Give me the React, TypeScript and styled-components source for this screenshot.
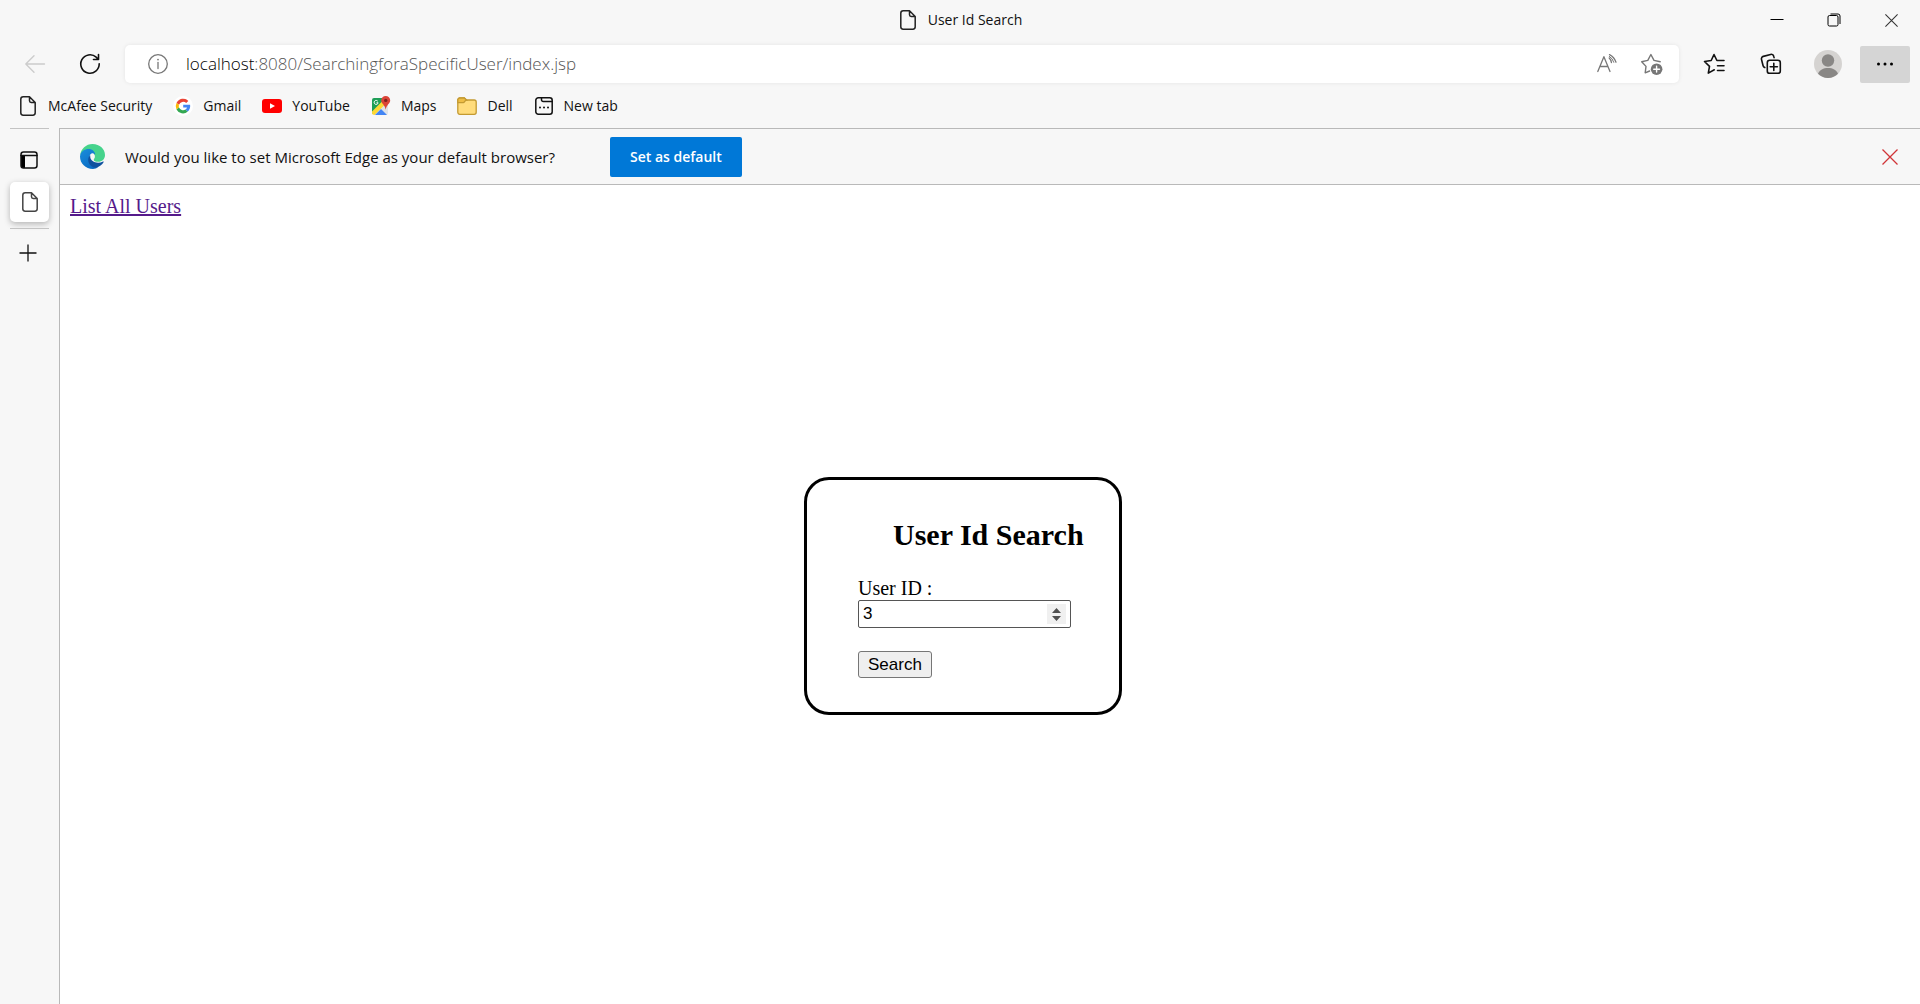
import React from 'react';
import styled, { createGlobalStyle } from 'styled-components';

const ui = '"Open Sans", "Noto Sans", sans-serif';
const serif = '"Liberation Serif", "Times New Roman", serif';
const sans = '"Liberation Sans", Arial, sans-serif';

const GlobalStyle = createGlobalStyle`
  * { box-sizing: border-box; }
  body { margin: 0; background: #f7f7f7; color: #111; font-family: ${ui}; }
  button { font-family: inherit; }
`;

const Window = styled.div`
  display: flex;
  flex-direction: column;
  min-height: 100vh;
`;

const TitleBar = styled.header`
  display: grid;
  grid-template-columns: 1fr auto 1fr;
  align-items: center;
  height: 40px;
`;

const Title = styled.div`
  grid-column: 2;
  display: flex;
  align-items: center;
  gap: 10px;
  font-size: 14px;
  line-height: 20px;
`;

const WindowControls = styled.div`
  display: flex;
  justify-content: flex-end;
`;

const IconButton = styled.button<{ $width?: number; $height?: number; $active?: boolean }>`
  display: flex;
  align-items: center;
  justify-content: center;
  flex: none;
  width: ${(p) => p.$width ?? 50}px;
  height: ${(p) => p.$height ?? 37}px;
  padding: 0;
  border: 0;
  border-radius: 2px;
  background: ${(p) => (p.$active ? '#d5d5d5' : 'transparent')};
  color: inherit;
`;

const Toolbar = styled.div`
  display: flex;
  align-items: center;
  gap: 10px;
  height: 48px;
  padding: 0 10px;
`;

const ButtonGroup = styled.div<{ $gap: number }>`
  display: flex;
  gap: ${(p) => p.$gap}px;
`;

const AddressBar = styled.div`
  display: flex;
  flex: 1;
  align-items: center;
  height: 38px;
  padding: 0 5px 0 10px;
  border-radius: 5px;
  background: #fff;
  box-shadow: 0 0 4px rgba(0, 0, 0, 0.08);
  color: #777;
`;

const Url = styled.a`
  flex: 1;
  margin-left: 6px;
  color: #555;
  font-size: 17px;
  font-weight: 300;
  line-height: 24px;
  text-decoration: none;
`;

const Host = styled.span`
  color: #000;
`;

const Bookmarks = styled.nav`
  display: flex;
  align-items: center;
  gap: 21px;
  height: 40px;
  padding: 0 18px 4px;
`;

const Bookmark = styled.a`
  display: flex;
  align-items: center;
  gap: 10px;
  color: #111;
  font-size: 14px;
  line-height: 20px;
  text-decoration: none;
`;

const Main = styled.div`
  display: flex;
  flex: 1;
`;

const Sidebar = styled.aside`
  display: flex;
  flex-direction: column;
  align-items: center;
  width: 59px;
`;

const Rule = styled.hr`
  width: 39px;
  height: 1px;
  margin: 0;
  border: 0;
  background: #c3c3c3;
`;

const TabActions = styled.div`
  display: flex;
  align-items: center;
  justify-content: center;
  height: 53px;
  padding: 8px 2px 0 0;
`;

const NewTab = styled.div`
  padding: 0 3px 0 0;
`;

const ActiveTab = styled.button`
  display: flex;
  align-items: center;
  justify-content: center;
  width: 39px;
  height: 40px;
  margin-bottom: 6px;
  padding: 0;
  border: 0;
  border-radius: 5px;
  background: #fff;
  box-shadow: 0 2px 6px rgba(0, 0, 0, 0.28);
`;

const Content = styled.div`
  display: flex;
  flex: 1;
  flex-direction: column;
  border-left: 1px solid #b9b9b9;
`;

const InfoBar = styled.div`
  display: flex;
  align-items: center;
  height: 57px;
  padding: 0 5px 0 20px;
  border: solid #b9b9b9;
  border-width: 1px 0;
`;

const InfoText = styled.p`
  margin: 0 0 0 20px;
  font-size: 15px;
  line-height: 20px;
`;

const DefaultButton = styled.button`
  height: 40px;
  margin: 0 auto 0 55px;
  padding: 0 20px;
  border: 0;
  border-radius: 2px;
  background: #0078d7;
  color: #fff;
  font-size: 14px;
  font-weight: 600;
  line-height: 20px;
`;

const Page = styled.main`
  flex: 1;
  padding: 10px;
  background: #fff;
  color: #000;
  font-family: ${serif};
  font-size: 20px;
  line-height: 23px;
`;

const PageLink = styled.a`
  color: #551a8b;
`;

const SearchForm = styled.form`
  display: flex;
  flex-direction: column;
  align-items: flex-start;
  width: 318px;
  margin-top: 259px;
  margin-left: calc(40% - 2px);
  padding: 38px 35px 34px 51px;
  border: 3px solid #000;
  border-radius: 25px;
`;

const Heading = styled.h2`
  margin: 0 0 25px;
  padding-left: 35px;
  font-size: 30px;
  line-height: 34px;
  white-space: nowrap;
`;

const spinArrows =
  "url(\"data:image/svg+xml,%3Csvg xmlns='http://www.w3.org/2000/svg' width='19' height='20'%3E%3Cpath d='M5 9l4.500-5 4.500 5zM5 12l4.500 5 4.500-5z' fill='%23505050'/%3E%3C/svg%3E\")";

const UserId = styled.input`
  width: 213px;
  height: 28px;
  margin-bottom: 23px;
  padding: 1px 4px;
  border: 1px solid #555;
  border-radius: 2px;
  background: #fff;
  color: #000;
  font-family: ${sans};
  font-size: 17px;

  &::-webkit-inner-spin-button {
    appearance: none;
    width: 19px;
    height: 20px;
    background: #f0f0f0 ${spinArrows} center no-repeat;
    opacity: 1;
  }
`;

const SearchButton = styled.button`
  height: 27px;
  padding: 0 9px;
  border: 1px solid #767676;
  border-radius: 3px;
  background: #efefef;
  color: #000;
  font-family: ${sans};
  font-size: 17px;
  line-height: 20px;
`;

const line = { fill: 'none', stroke: 'currentColor', strokeLinecap: 'round', strokeLinejoin: 'round' } as const;

const FileIcon = ({ color = '#222' }: { color?: string }) => (
  <svg width="20" height="22" viewBox="0 0 20 22" {...line} stroke={color} strokeWidth="1.5">
    <path d="M11.5 1.8H5.2a2.4 2.4 0 0 0-2.4 2.4v13.6a2.4 2.4 0 0 0 2.4 2.4h9.6a2.4 2.4 0 0 0 2.4-2.4V7.5zM11.5 1.8v4a1.7 1.7 0 0 0 1.7 1.7h4" />
  </svg>
);

const BackIcon = () => (
  <svg width="22" height="20" viewBox="0 0 22 20" {...line} stroke="#ccc" strokeWidth="1.4">
    <path d="M20.5 10H1.8M10 1.8L1.8 10l8.2 8.2" />
  </svg>
);

const RefreshIcon = () => (
  <svg width="22" height="22" viewBox="0 0 22 22" {...line} strokeWidth="1.6">
    <path d="M20.2 10.8a9.2 9.2 0 1 1-3-6.6l2.2 2.2M19.5 1.5v5h-5" />
  </svg>
);

const InfoIcon = () => (
  <svg width="22" height="22" viewBox="0 0 22 22" {...line} strokeWidth="1.3">
    <circle cx="11" cy="11" r="9.3" />
    <path d="M11 9.5v6" />
    <circle cx="11" cy="6.6" r="0.9" fill="currentColor" stroke="none" />
  </svg>
);

const ReadAloudIcon = () => (
  <svg width="22" height="22" viewBox="0 0 22 22" {...line} strokeWidth="1.3">
    <path d="M1.8 18.5L7.9 3.7l6.1 14.8M3.8 13.5h8.2M13.2 5q1.8 1.6 2.2 4.5M13.5 1.6q4.8 2.4 6.500 7.600" />
    <path d="M13.300 3.300q3.400 2 4.500 6" strokeWidth="1" />
  </svg>
);

const StarAddIcon = () => (
  <svg width="24" height="24" viewBox="0 0 24 24" {...line} strokeWidth="1.4">
    <path d="M9.6 19L5.2 20.8 6 14.4 1.7 9.7l6.1-1.3 3.1-5.9 3.1 5.9 6.2 1.3" />
    <circle cx="16.600" cy="17.200" r="5.800" fill="#777" stroke="none" />
    <path d="M16.600 14.300v5.800M13.700 17.200h5.800" stroke="#fff" />
  </svg>
);

const FavoritesIcon = () => (
  <svg width="24" height="24" viewBox="0 0 24 24" {...line} strokeWidth="1.6">
    <path d="M12.300 18.300L6.300 21.600l1.200-6.700L2.500 10l6.700-1L12 3l2.900 6H22M15.500 14.300H22M15.500 19H22" transform="translate(0 -.5)" />
  </svg>
);

const CollectionsIcon = () => (
  <svg width="24" height="24" viewBox="0 0 24 24" {...line} strokeWidth="1.6">
    <path d="M5.800 15.600a2.500 2.500 0 0 1-1.700-1.800L2.500 7.500A2.500 2.500 0 0 1 4.300 4.400l7.300-2a2.500 2.500 0 0 1 3.100 1.800l.4 1.400" />
    <rect x="8.300" y="8.300" width="13" height="13" rx="2.400" />
    <path d="M14.800 11.200v7.200M11.200 14.800h7.200" />
  </svg>
);

const AvatarIcon = () => (
  <svg width="28" height="28" viewBox="0 0 28 28">
    <circle cx="14" cy="14" r="14" fill="#d5d3d1" />
    <circle cx="14" cy="10.500" r="6.200" fill="#898785" />
    <path d="M4 23.800C5.500 20 9.400 18 14 18s8.500 2 10 5.800A14 14 0 0 1 4 23.800z" fill="#898785" />
  </svg>
);

const MoreIcon = () => (
  <svg width="18" height="4" viewBox="0 0 18 4">
    <circle cx="2.500" cy="2" r="1.500" />
    <circle cx="9" cy="2" r="1.500" />
    <circle cx="15.500" cy="2" r="1.500" />
  </svg>
);

const MinimizeIcon = () => (
  <svg width="14" height="14" viewBox="0 0 14 14" stroke="#000">
    <path d="M.5 6.500h13" />
  </svg>
);

const RestoreIcon = () => (
  <svg width="14" height="14" viewBox="0 0 14 14" fill="none" stroke="#000">
    <rect x="1" y="2.500" width="10" height="10.500" rx="1.500" />
    <path d="M3.500 1h7.500a2 2 0 0 1 2 2v8" />
  </svg>
);

const CloseIcon = ({ size, color }: { size: number; color: string }) => (
  <svg width={size} height={size} viewBox="0 0 16 16" stroke={color} strokeWidth="1.300">
    <path d="M.5.5l15 15M15.500.5l-15 15" />
  </svg>
);

const GoogleIcon = () => (
  <svg width="20" height="20" viewBox="0 0 20 20">
    <circle cx="10" cy="10" r="10" fill="#fff" />
    <path d="M15.300 5A7.200 7.200 0 0 0 3.500 6.900L6 8.700A4.500 4.500 0 0 1 13.200 7z" fill="#ea4335" />
    <path d="M3.500 6.900a7.200 7.200 0 0 0 0 6.500L6 11.500a4.500 4.500 0 0 1 0-2.800z" fill="#fbbc05" />
    <path d="M3.500 13.400a7.200 7.200 0 0 0 11.300 2.100l-2.300-2A4.500 4.500 0 0 1 6 11.500z" fill="#34a853" />
    <path d="M10.200 8.700h6.900c.4 2.700-.5 5.200-2.300 6.800l-2.300-2a3.600 3.600 0 0 0 1.500-2h-3.800z" fill="#4285f4" />
  </svg>
);

const YouTubeIcon = () => (
  <svg width="20" height="20" viewBox="0 0 20 20">
    <rect y="3" width="20" height="14" rx="3" fill="#f00" />
    <path d="M8 7.200v5.600l5-2.800z" fill="#fff" />
  </svg>
);

const MapsIcon = () => (
  <svg width="20" height="20" viewBox="0 0 20 20">
    <path d="M1 4a2 2 0 0 1 2-2h12v7l-5 1.500L2 18a2 2 0 0 1-1-2z" fill="#1e9e57" />
    <path d="M2.500 18.500L13 8l4 1v8a2 2 0 0 1-2 2H4z" fill="#dfe3e8" />
    <path d="M1 15.500L12 4.500l3 3L3.500 19A2.500 2.500 0 0 1 1 16.500z" fill="#fdd835" />
    <path d="M4 19l6-6 6 6z" fill="#4285f4" />
    <path d="M6.800 5.300a2 2 0 1 0 .3 1.500H5.500" fill="none" stroke="#fff" />
    <path d="M14.700 0a4.500 4.500 0 0 0-4.500 4.500c0 3 3.800 4.200 4.500 9.200.7-5 4.500-6.200 4.500-9.200A4.500 4.500 0 0 0 14.700 0z" fill="#db4437" />
    <circle cx="14.700" cy="4.400" r="1.700" fill="#7b231e" />
  </svg>
);

const FolderIcon = () => (
  <svg width="20" height="20" viewBox="0 0 20 20" fill="#ffdc7c" stroke="#c39a32" strokeWidth="1.300">
    <path d="M.8 4a2 2 0 0 1 2-2h4.500l2.200 2h7.700a2 2 0 0 1 2 2v10.300a2 2 0 0 1-2 2H2.800a2 2 0 0 1-2-2z" />
    <path d="M.8 6.700h5.500c1.200 0 1.800-2.700 3.200-2.700L7.300 2H2.800a2 2 0 0 0-2 2z" fill="#eebd45" />
  </svg>
);

const NewTabIcon = () => (
  <svg width="20" height="20" viewBox="0 0 20 20" {...line} strokeWidth="1.500">
    <rect x="1.800" y="1.800" width="16.400" height="16.400" rx="2.500" />
    <path d="M7.500 2v1.800a1.700 1.700 0 0 0 1.700 1.700H18" />
    <path d="M6 11.500h.01M10 11.500h.01M14 11.500h.01" strokeWidth="2" />
  </svg>
);

const TabActionsIcon = () => (
  <svg width="18" height="18" viewBox="0 0 18 18" {...line} strokeWidth="1.500">
    <path d="M1 4h4v13H3.500A2.500 2.500 0 0 1 1 14.500z" fill="#000" stroke="none" />
    <rect x="1" y="1" width="16" height="16" rx="2.500" />
    <path d="M1 4.500h16" />
  </svg>
);

const PlusIcon = () => (
  <svg width="18" height="18" viewBox="0 0 18 18" stroke="#111" strokeWidth="1.300">
    <path d="M9 .5v17M.5 9h17" />
  </svg>
);

const EdgeIcon = () => (
  <svg width="25" height="25" viewBox="0 0 256 256">
    <defs>
      <linearGradient id="edgeLeft" x1="0" y1="0" x2="0.600" y2="1">
        <stop offset="0" stopColor="#1b8edb" />
        <stop offset="1" stopColor="#0a6cc4" />
      </linearGradient>
    </defs>
    <path d="M2 116C8 50 62 0 128 0c76 0 128 53 128 112 0 42-31 70-69 70-31 0-49-9-49-21 0-8 12-13 12-34 0-28-27-51-64-51-45 0-75 20-84 40z" fill="#46d38c" />
    <path d="M1 120c9-44 44-68 90-68 32 0 60 22 66 56-35-16-62 8-62 42 0 50 40 86 91 89-17 11-35 17-53 17C57 256 0 199 0 128z" fill="url(#edgeLeft)" />
    <path d="M150 127c0-12-5-23-14-32-20-5-38 13-36 36 2 28 24 48 58 51-13-5-20-12-20-21 0-8 12-13 12-34z" fill="#f7f7f7" />
    <path d="M105 114c-45 36-15 127 62 129 32-10 59-30 76-58 3-5-1-8-6-6-62 29-129 2-132-45z" fill="#0f519f" />
  </svg>
);

const bookmarks = [
  { label: 'McAfee Security', icon: <FileIcon /> },
  { label: 'Gmail', icon: <GoogleIcon /> },
  { label: 'YouTube', icon: <YouTubeIcon /> },
  { label: 'Maps', icon: <MapsIcon /> },
  { label: 'Dell', icon: <FolderIcon /> },
  { label: 'New tab', icon: <NewTabIcon /> },
];

export default function App() {
  return (
    <Window>
      <GlobalStyle />
      <TitleBar>
        <Title>
          <FileIcon />
          User Id Search
        </Title>
        <WindowControls>
          <IconButton $width={57} aria-label="Minimize"><MinimizeIcon /></IconButton>
          <IconButton $width={57} aria-label="Restore"><RestoreIcon /></IconButton>
          <IconButton $width={58} aria-label="Close"><CloseIcon size={13} color="#333" /></IconButton>
        </WindowControls>
      </TitleBar>
      <Toolbar>
        <ButtonGroup $gap={5}>
          <IconButton aria-label="Back" disabled><BackIcon /></IconButton>
          <IconButton aria-label="Refresh"><RefreshIcon /></IconButton>
        </ButtonGroup>
        <AddressBar>
          <IconButton $width={45} aria-label="Site information"><InfoIcon /></IconButton>
          <Url href="#">
            <Host>localhost</Host>:8080/SearchingforaSpecificUser/index.jsp
          </Url>
          <IconButton $width={45} aria-label="Read aloud"><ReadAloudIcon /></IconButton>
          <IconButton $width={45} aria-label="Add to favorites"><StarAddIcon /></IconButton>
        </AddressBar>
        <ButtonGroup $gap={7}>
          <IconButton aria-label="Favorites"><FavoritesIcon /></IconButton>
          <IconButton aria-label="Collections"><CollectionsIcon /></IconButton>
          <IconButton aria-label="Profile"><AvatarIcon /></IconButton>
          <IconButton $active aria-label="Settings and more"><MoreIcon /></IconButton>
        </ButtonGroup>
      </Toolbar>
      <Bookmarks>
        {bookmarks.map((b) => (
          <Bookmark key={b.label} href="#">
            {b.icon}
            {b.label}
          </Bookmark>
        ))}
      </Bookmarks>
      <Main>
        <Sidebar>
          <Rule />
          <TabActions>
            <IconButton $width={39} aria-label="Tab actions menu"><TabActionsIcon /></IconButton>
          </TabActions>
          <ActiveTab aria-label="User Id Search tab"><FileIcon color="#444" /></ActiveTab>
          <Rule />
          <NewTab>
            <IconButton $width={39} $height={48} aria-label="New tab"><PlusIcon /></IconButton>
          </NewTab>
        </Sidebar>
        <Content>
          <InfoBar>
            <EdgeIcon />
            <InfoText>Would you like to set Microsoft Edge as your default browser?</InfoText>
            <DefaultButton>Set as default</DefaultButton>
            <IconButton aria-label="Dismiss"><CloseIcon size={16} color="#d13438" /></IconButton>
          </InfoBar>
          <Page>
            <PageLink href="#">List All Users</PageLink>
            <SearchForm onSubmit={(e) => e.preventDefault()}>
              <Heading>User Id Search</Heading>
              <label htmlFor="user-id">User ID :</label>
              <UserId id="user-id" type="number" defaultValue={3} />
              <SearchButton type="submit">Search</SearchButton>
            </SearchForm>
          </Page>
        </Content>
      </Main>
    </Window>
  );
}
